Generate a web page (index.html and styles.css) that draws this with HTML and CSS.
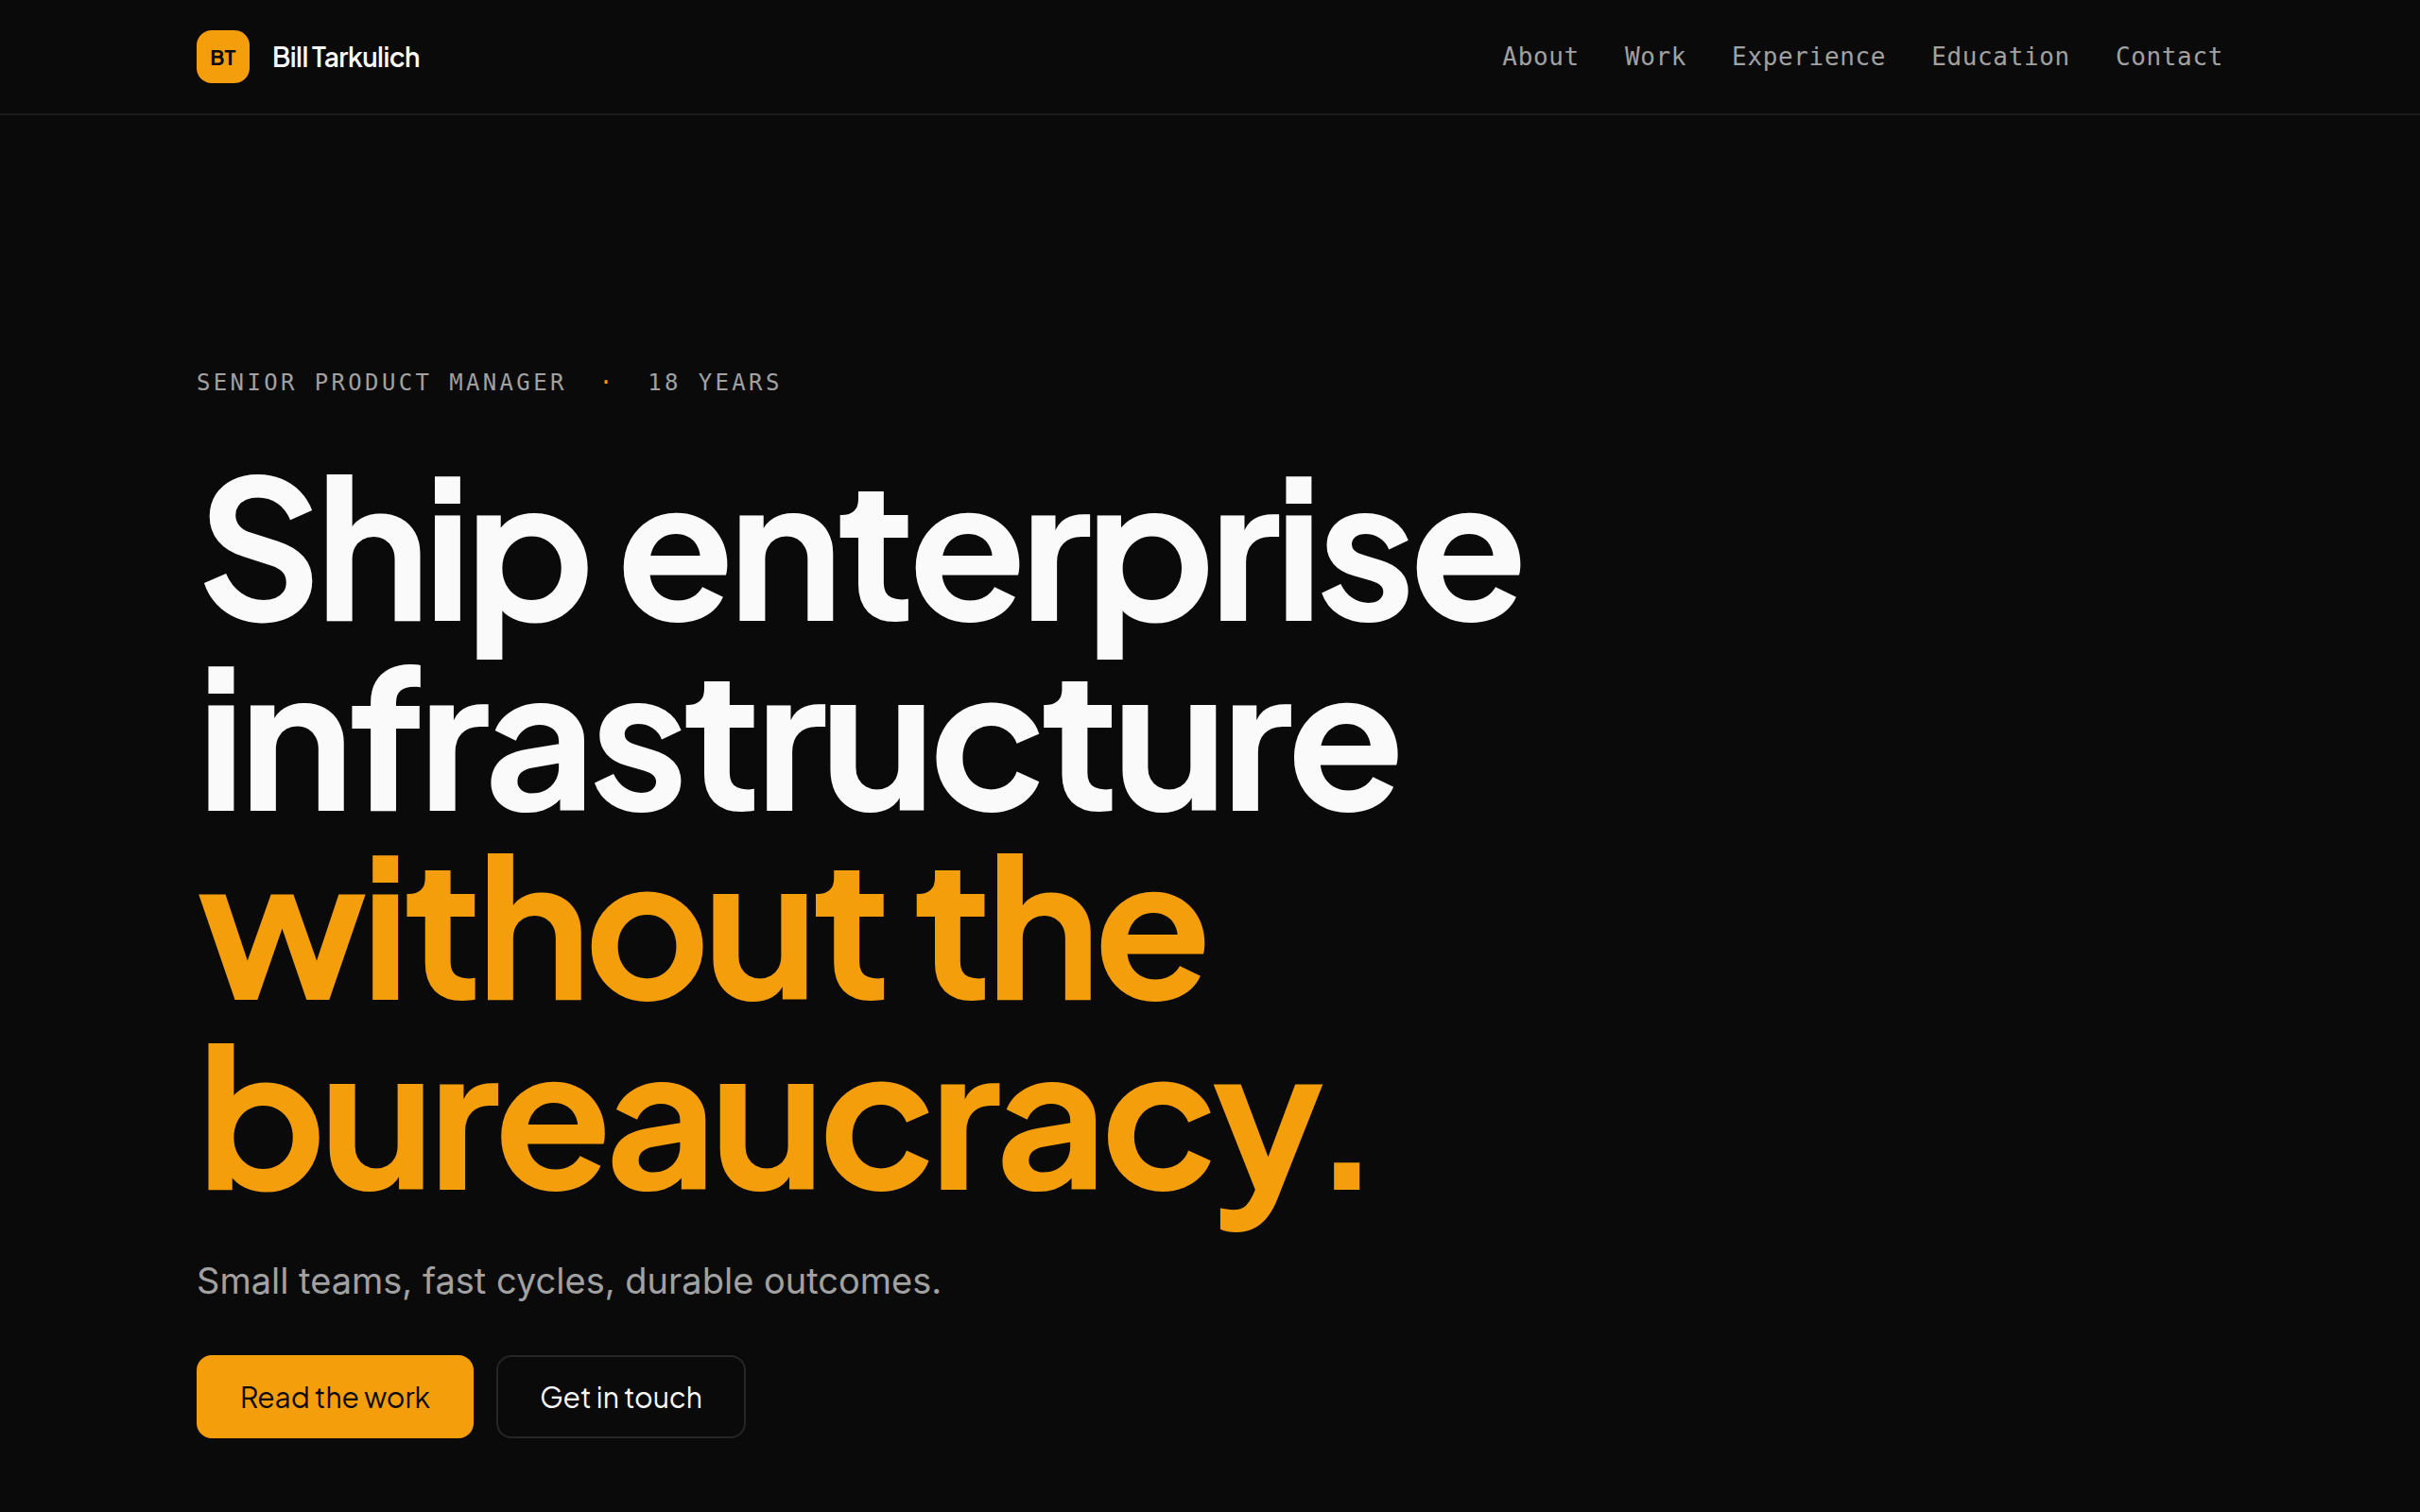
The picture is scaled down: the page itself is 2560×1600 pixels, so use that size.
FILE: index.html
```html
<!DOCTYPE html>
<html lang="en">
<head>
<meta charset="UTF-8">
<meta name="viewport" content="width=device-width, initial-scale=1.0">
<title>Bill Tarkulich</title>
<link rel="stylesheet" href="styles.css">
</head>
<body>
<header class="site-header">
  <div class="container header-inner">
    <a class="brand" href="#top">
      <span class="brand-mark">BT</span>
      <span class="brand-name">Bill Tarkulich</span>
    </a>
    <nav class="nav">
      <a href="#about">About</a>
      <a href="#work">Work</a>
      <a href="#experience">Experience</a>
      <a href="#education">Education</a>
      <a href="#contact">Contact</a>
    </nav>
  </div>
</header>

<main id="top">
  <section class="container hero">
    <p class="eyebrow">Senior Product Manager <span class="dot">·</span> 18 years</p>
    <h1>Ship enterprise<br>infrastructure<br><span class="accent">without the<br>bureaucracy.</span></h1>
    <p class="lede">Small teams, fast cycles, durable outcomes.</p>
    <div class="actions">
      <a class="btn btn-primary" href="#work">Read the work</a>
      <a class="btn btn-ghost" href="#contact">Get in touch</a>
    </div>
  </section>
</main>
</body>
</html>
```
FILE: styles.css
```css
:root {
  --bg: #0a0a0a;
  --text: #fafafa;
  --muted: #a1a1a1;
  --line: #1a1a1a;
  --line-strong: #262626;
  --accent: #f59e0b;
  --sans: "Plus Jakarta Sans", Inter, sans-serif;
  --mono: "DejaVu Sans Mono", monospace;
}

* {
  box-sizing: border-box;
}

body {
  margin: 0;
  background: var(--bg);
  color: var(--text);
  font-family: Inter, sans-serif;
  -webkit-font-smoothing: antialiased;
}

a {
  color: inherit;
  text-decoration: none;
}

.container {
  max-width: 2240px;
  margin: 0 auto;
  padding: 0 48px;
}

/* Header */
.site-header {
  border-bottom: 2px solid var(--line);
}

.header-inner {
  display: flex;
  align-items: center;
  justify-content: space-between;
  padding-top: 32px;
  padding-bottom: 32px;
}

.brand {
  display: flex;
  align-items: center;
  gap: 24px;
  font-family: var(--sans);
  font-size: 28px;
  font-weight: 600;
  line-height: 44px;
  letter-spacing: -0.02em;
}

.brand-mark {
  display: grid;
  place-items: center;
  width: 56px;
  height: 56px;
  border-radius: 16px;
  background: var(--accent);
  color: var(--bg);
  font-size: 22px;
  font-weight: 700;
  letter-spacing: 0.02em;
}

.nav {
  display: flex;
  gap: 48px;
  color: var(--muted);
  font-family: var(--mono);
  font-size: 26px;
  letter-spacing: 0.025em;
}

.nav a:hover {
  color: var(--text);
}

/* Hero */
.hero {
  padding-top: 264px;
  padding-bottom: 76px;
}

.eyebrow {
  margin: 0 0 48px;
  color: var(--muted);
  font-family: var(--mono);
  font-size: 24px;
  line-height: 39px;
  letter-spacing: 0.14em;
  text-transform: uppercase;
}

.dot {
  margin: 0 16px;
  color: var(--accent);
}

h1 {
  margin: 0;
  font-family: var(--sans);
  font-size: 8vw;
  font-weight: 700;
  line-height: 0.98;
  letter-spacing: -0.035em;
}

.accent {
  color: var(--accent);
}

.lede {
  margin: 48px 0;
  color: var(--muted);
  font-size: 38px;
  line-height: 62px;
}

.actions {
  display: flex;
  gap: 24px;
}

.btn {
  padding: 22px 44px;
  border: 2px solid transparent;
  border-radius: 16px;
  font-family: var(--sans);
  font-size: 30px;
  line-height: 40px;
}

.btn-primary {
  background: var(--accent);
  border-color: var(--accent);
  color: var(--bg);
}

.btn-ghost {
  border-color: var(--line-strong);
}
```
